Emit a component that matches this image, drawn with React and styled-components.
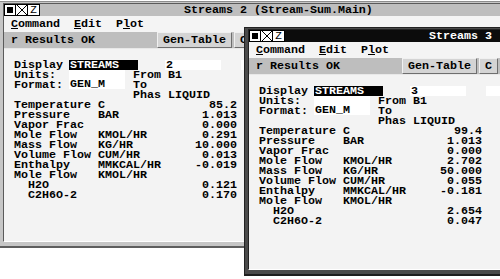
import React from 'react'
import styled, { createGlobalStyle, css } from 'styled-components'

const streams = [
   {
      id: 2,
      title: 'Streams 2 (Stream-Sum.Main)',
      x: -1,
      y: 1,
      height: 247,
      active: false,
      rows: [
         ['Temperature', 'C', '85.2'],
         ['Pressure', 'BAR', '1.013'],
         ['Vapor Frac', '', '0.000'],
         ['Mole Flow', 'KMOL/HR', '0.291'],
         ['Mass Flow', 'KG/HR', '10.000'],
         ['Volume Flow', 'CUM/HR', '0.013'],
         ['Enthalpy', 'MMKCAL/HR', '-0.019'],
         ['Mole Flow', 'KMOL/HR', ''],
         ['H2O', '', '0.121', true],
         ['C2H6O-2', '', '0.170', true],
      ],
   },
   {
      id: 3,
      title: 'Streams 3',
      x: 244,
      y: 27,
      height: 249,
      active: true,
      rows: [
         ['Temperature', 'C', '99.4'],
         ['Pressure', 'BAR', '1.013'],
         ['Vapor Frac', '', '0.000'],
         ['Mole Flow', 'KMOL/HR', '2.702'],
         ['Mass Flow', 'KG/HR', '50.000'],
         ['Volume Flow', 'CUM/HR', '0.055'],
         ['Enthalpy', 'MMKCAL/HR', '-0.181'],
         ['Mole Flow', 'KMOL/HR', ''],
         ['H2O', '', '2.654', true],
         ['C2H6O-2', '', '0.047', true],
      ],
   },
]

const WindowControls = () => (
   <Controls>
      <CtrlBox>
         <svg width="10" height="10" viewBox="0 0 10 10">
            <rect x="2" y="2" width="6" height="6" fill="#000" />
         </svg>
      </CtrlBox>
      <CtrlBox>
         <svg width="10" height="10" viewBox="0 0 10 10">
            <path d="M0 0 L10 10 M10 0 L0 10" stroke="#000" strokeWidth="1" />
         </svg>
      </CtrlBox>
      <CtrlBox>
         <ZGlyph>Z</ZGlyph>
      </CtrlBox>
   </Controls>
)

const StreamWindow = ({ data }) => (
   <Frame $x={data.x} $y={data.y} $h={data.height} $active={data.active}>
      <Body $active={data.active}>
         <TitleBar $active={data.active}>
            <WindowControls />
            <TitleText>{data.title}</TitleText>
         </TitleBar>
         <MenuBar>
            <MenuItem><u>C</u>ommand</MenuItem>
            <MenuItem><u>E</u>dit</MenuItem>
            <MenuItem>P<u>l</u>ot</MenuItem>
         </MenuBar>
         <Toolbar>
            <Status>r Results OK</Status>
            <ToolButton>Gen-Table</ToolButton>
            <ToolButton>C</ToolButton>
         </Toolbar>
         <Content>
            <DisplayRow>
               <Label>Display</Label>
               <InvField>STREAMS</InvField>
               <Field $gap={27}>{data.id}</Field>
               <Field $gap={20} />
            </DisplayRow>
            <HeaderGrid>
               <Label>Units:</Label>
               <TallField>GEN_M</TallField>
               <span>From</span>
               <span>B1</span>
               <Label>Format:</Label>
               <span>To</span>
               <span />
               <Label />
               <span />
               <span>Phas</span>
               <span>LIQUID</span>
            </HeaderGrid>
            <DataGrid>
               {data.rows.map(([name, unit, value, indent], i) => (
                  <React.Fragment key={i}>
                     <DataName $indent={indent}>{name}</DataName>
                     <span>{unit}</span>
                     <Value>{value}</Value>
                  </React.Fragment>
               ))}
            </DataGrid>
         </Content>
      </Body>
   </Frame>
)

export default function App() {
   return (
      <>
         <GlobalStyle />
         <Desktop>
            {streams.map(s => (
               <StreamWindow key={s.id} data={s} />
            ))}
         </Desktop>
      </>
   )
}

const GlobalStyle = createGlobalStyle`
   html, body {
      margin: 0;
      padding: 0;
      background: #fff;
      overflow: hidden;
   }
`

const Desktop = styled.div`
   position: relative;
   width: 500px;
   height: 279px;
   overflow: hidden;
   background: #fff;
`

const Frame = styled.div(
   ({ $x, $y, $h, $active }) => css`
      position: absolute;
      left: ${$x}px;
      top: ${$y}px;
      width: 580px;
      height: ${$h}px;
      box-sizing: border-box;
      display: flex;
      flex-direction: column;
      padding: 1px 3px 4px 3px;
      background: ${$active ? '#4a4a4a' : '#c6c6c6'};
      border: 1px solid ${$active ? '#222' : '#8c8c8c'};
      border-bottom: 2px solid ${$active ? '#1e1e1e' : '#5e5e5e'};
      font: bold 11.67px/10px 'Liberation Mono', 'DejaVu Sans Mono', monospace;
      color: #000;
   `
)

const Body = styled.div`
   flex: 1;
   display: flex;
   flex-direction: column;
   border: 1px solid ${p => (p.$active ? '#222' : '#5a5a5a')};
   border-bottom-color: #fff;
   min-height: 0;
`

const TitleBar = styled.div`
   height: 12px;
   display: flex;
   align-items: center;
   background: ${p => (p.$active ? '#0c0c0c' : '#bebebe')};
   color: ${p => (p.$active ? '#fff' : '#000')};
`

const Controls = styled.div`
   display: flex;
   height: 12px;
`

const CtrlBox = styled.div`
   width: 10px;
   height: 10px;
   border: 1px solid #000;
   background: #fff;
   display: flex;
   align-items: center;
   justify-content: center;
   overflow: hidden;
   & + & {
      border-left: none;
      width: 11px;
   }
`

const ZGlyph = styled.span`
   font: 11px/10px 'Liberation Mono', monospace;
   color: #000;
`

const TitleText = styled.span`
   margin-left: 144px;
   white-space: pre;
   line-height: 12px;
`

const MenuBar = styled.div`
   height: 16px;
   display: flex;
   align-items: center;
   gap: 14px;
   padding-left: 7px;
   background: #f4f4f4;
   u {
      text-decoration-thickness: 1px;
      text-underline-offset: 1px;
   }
`

const MenuItem = styled.span`
   white-space: pre;
`

const Toolbar = styled.div`
   height: 16px;
   display: flex;
   align-items: stretch;
   background: #bebebe;
   border-bottom: 1px solid #e8e8e8;
`

const Status = styled.span`
   flex: 0 0 146px;
   padding-left: 7px;
   display: flex;
   align-items: center;
   white-space: pre;
`

const ToolButton = styled.span`
   display: flex;
   align-items: center;
   padding: 0 5px;
   margin-right: 2px;
   background: #d4d4d4;
   border: 1px solid #f0f0f0;
   border-right-color: #6e6e6e;
   border-bottom-color: #6e6e6e;
`

const Content = styled.div`
   flex: 1;
   background: #f3f3f3;
   padding: 11px 0 0 10px;
`

const Label = styled.span`
   white-space: pre;
`

const DisplayRow = styled.div`
   display: flex;
   height: 10px;
   & > ${Label} {
      width: 55px;
   }
`

const InvField = styled.span`
   width: 68px;
   padding-left: 1px;
   background: #000;
   color: #fff;
`

const Field = styled.span`
   width: 55px;
   padding-left: 1px;
   margin-left: ${p => p.$gap}px;
   background: #fff;
`

const HeaderGrid = styled.div`
   display: grid;
   grid-template-columns: 55px 64px 35px 1fr;
   grid-auto-rows: 10px;
`

const TallField = styled.span`
   grid-row: span 2;
   width: 55px;
   padding-left: 1px;
   background: #fff;
   display: flex;
   align-items: flex-end;
   margin-bottom: 1px;
`

const DataGrid = styled.div`
   display: grid;
   width: 223px;
   grid-template-columns: 84px 1fr auto;
   grid-auto-rows: 10px;
   white-space: pre;
`

const DataName = styled.span`
   padding-left: ${p => (p.$indent ? 14 : 0)}px;
`

const Value = styled.span`
   text-align: right;
`
